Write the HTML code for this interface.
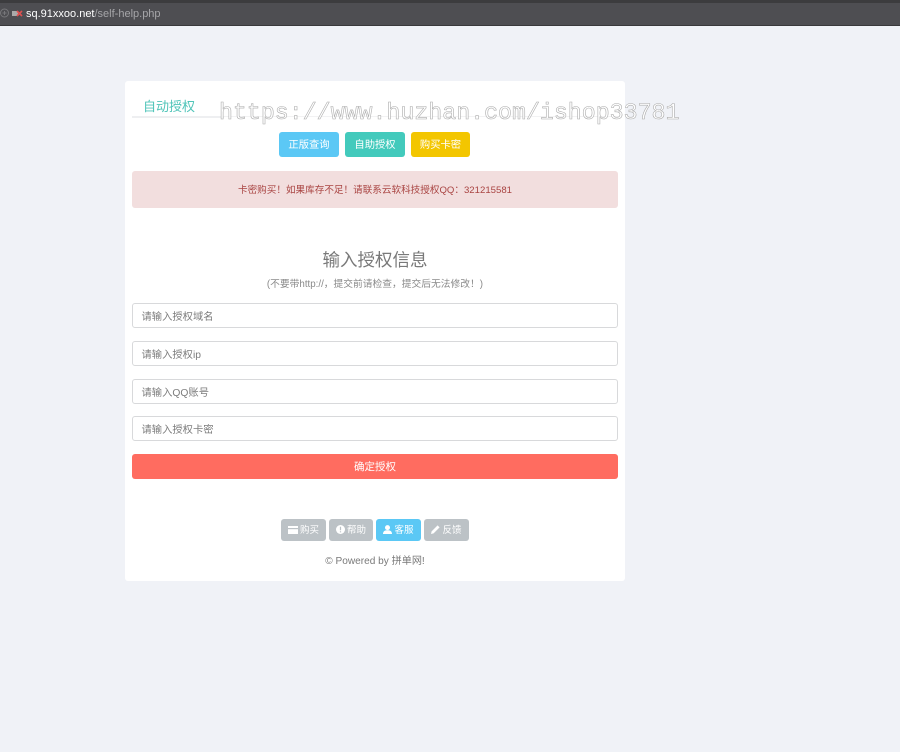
<!DOCTYPE html>
<html lang="zh"><head><meta charset="utf-8"><title>自动授权</title>
<style>
html,body{margin:0;padding:0;background:#f0f2f7}
body{width:900px;height:752px;overflow:hidden}
#w{position:relative;width:900px;height:752px;overflow:hidden;background:#f0f2f7;font-family:"Liberation Sans","Noto Sans CJK SC",sans-serif;color:#797979;filter:blur(.3px)}
.a{position:absolute;white-space:nowrap}
.bar{left:0;top:0;width:900px;height:26px;background:#4e4e52;border-top:3px solid #3c3c3e;border-bottom:1px solid #39393b;box-sizing:border-box}
.card{left:125px;top:81px;width:500px;height:500px;background:#fff;border-radius:3px}
.btn{height:25px;line-height:27px;border-radius:3px;color:#fff;font-size:10.3px;text-align:center}
.inp{left:132px;width:486px;height:25px;box-sizing:border-box;border:1px solid #d8d9db;border-radius:3px;background:#fff;font-size:10.3px;line-height:25px;padding-top:1px;padding-left:8.5px;color:#7c7c7c}
.sm{top:519px;height:22px;line-height:23px;border-radius:3px;background:#bcc2c6;color:#fff;font-size:9.5px;text-align:center}
.sm svg{vertical-align:-1px;margin-right:2px}
</style></head><body><div id="w">
<div class="a bar"></div>
<svg class="a" style="left:0;top:7px" width="26" height="12" viewBox="0 0 26 12"><circle cx="4.5" cy="6" r="4" fill="none" stroke="#77777a"/><path d="M4.5 4v4M2.5 6h4" stroke="#77777a"/><rect x="12" y="4" width="6" height="5" fill="#aaa"/><path d="M17 4l5 5M22 4l-5 5" stroke="#e05050" stroke-width="1.6"/></svg>
<div class="a" style="left:26px;top:6px;font-size:11px;line-height:16px;color:#fff">sq.91xxoo.net<span style="color:#a5a5a8">/self-help.php</span></div>

<div class="a card"></div>
<div class="a" style="left:132px;top:116px;width:92px;height:2px;background:#eeeff1"></div>
<div class="a" style="left:224px;top:116px;width:394px;height:1px;background:#f2f2f3"></div>
<div class="a" style="left:143px;top:97px;font-size:13px;line-height:19px;color:#4fc4b8">自动授权</div>

<div class="a btn" style="left:279px;top:132px;width:60px;background:#5bc8f5">正版查询</div>
<div class="a btn" style="left:345px;top:132px;width:60px;background:#43cabc">自助授权</div>
<div class="a btn" style="left:411px;top:132px;width:59px;background:#f3c600">购买卡密</div>

<div class="a" style="left:132px;top:171px;width:486px;height:37px;background:#f2dede;border-radius:3px;text-align:center;font-size:9.6px;line-height:39px;color:#a94442">卡密购买！如果库存不足！请联系云软科技授权QQ：321215581</div>

<div class="a" style="left:125px;top:248px;width:500px;text-align:center;font-size:17.5px;line-height:24px;color:#797979">输入授权信息</div>
<div class="a" style="left:125px;top:277px;width:500px;text-align:center;font-size:9.75px;line-height:15px;color:#8a8a8a">(不要带http://，提交前请检查，提交后无法修改！)</div>

<div class="a inp" style="top:303px">请输入授权域名</div>
<div class="a inp" style="top:341px">请输入授权ip</div>
<div class="a inp" style="top:379px">请输入QQ账号</div>
<div class="a inp" style="top:416px">请输入授权卡密</div>

<div class="a btn" style="left:132px;top:454px;width:486px;background:#ff6c60;line-height:27px;font-size:10.5px">确定授权</div>

<div class="a sm" style="left:281px;width:45px"><svg width="10" height="8" viewBox="0 0 10 8"><path d="M0 0h10v8H0z" fill="#fff"/><path d="M0 2h10v1.2H0z" fill="#bcc2c6"/></svg>购买</div>
<div class="a sm" style="left:329px;width:44px"><svg width="9" height="9" viewBox="0 0 9 9"><circle cx="4.5" cy="4.5" r="4.5" fill="#fff"/><path d="M4.5 1.8v3.4M4.5 6.2v1.2" stroke="#bcc2c6" stroke-width="1.2"/></svg>帮助</div>
<div class="a sm" style="left:376px;width:45px;background:#5bc8f5"><svg width="9" height="9" viewBox="0 0 9 9"><circle cx="4.5" cy="2.6" r="2.5" fill="#fff"/><path d="M0 9c0-3 2-3.8 4.5-3.8S9 6 9 9z" fill="#fff"/></svg>客服</div>
<div class="a sm" style="left:424px;width:45px"><svg width="9" height="9" viewBox="0 0 9 9"><path d="M0 9l.6-2.6L6.6.4l2 2-6 6z" fill="#fff"/></svg>反馈</div>

<div class="a" style="left:125px;top:554px;width:500px;text-align:center;font-size:10.1px;line-height:15px;color:#797979">© Powered by 拼单网!</div>

<div class="a" style="left:219px;top:98px;font-family:'Liberation Mono',monospace;font-size:23.25px;line-height:30px;color:#fff;-webkit-text-stroke:.6px #adadad">https://www.huzhan.com/ishop33781</div>
</div></body></html>
